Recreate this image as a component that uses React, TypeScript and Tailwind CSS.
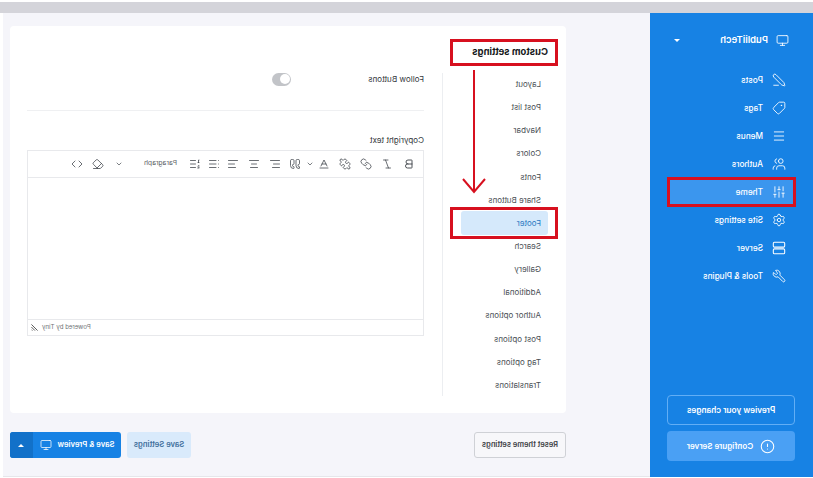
import React from "react";
import { Monitor, PenLine, Tag, Menu, Users, SlidersVertical, Settings, Wrench, CircleAlert, Bold, Italic, Link, Puzzle, Baseline, ChevronDown, Quote, AlignLeft, AlignCenter, AlignRight, List, ListOrdered, Eraser, Code } from "lucide-react";

const ServerIcon = ({ className }: { className?: string }) => (
  <svg viewBox="0 0 16 16" fill="none" stroke="currentColor" strokeWidth="1.2" className={className}>
    <rect x="1.5" y="1.5" width="13" height="5.5" rx="1.2" />
    <rect x="1.5" y="9" width="13" height="5.5" rx="1.2" />
  </svg>
);

const sideItems = [
  { label: "Posts", icon: PenLine },
  { label: "Tags", icon: Tag },
  { label: "Menus", icon: Menu },
  { label: "Authors", icon: Users },
  { label: "Theme", icon: SlidersVertical, active: true },
  { label: "Site settings", icon: Settings },
  { label: "Server", icon: ServerIcon },
  { label: "Tools & Plugins", icon: Wrench },
];

const navItems = ["Layout", "Post list", "Navbar", "Colors", "Fonts", "Share Buttons", "Footer", "Search", "Gallery", "Additional", "Author options", "Post options", "Tag options", "Translations"];

function Sidebar() {
  return (
    <aside className="w-[163px] h-[464px] bg-[#1782e4] flex flex-col text-white shrink-0">
      <div className="flex items-center h-[54px] pl-[24px] pr-[24px]">
        <Monitor className="w-[13px] h-[13px] mr-[8px]" strokeWidth={1.6} />
        <span className="text-[9.5px] font-semibold">PubliiTech</span>
        <span className="ml-auto w-0 h-0 border-x-[3px] border-x-transparent border-t-[3px] border-t-white" />
      </div>
      <nav className="flex flex-col mt-[-1px] pl-[18px] pr-[18px]">
        {sideItems.map((it) => {
          const Icon = it.icon;
          return (
            <div key={it.label} className={`h-[28px] flex items-center pl-[9px] w-[127px] rounded-[2px] ${it.active ? "bg-[#3b96ee]" : ""}`}>
              <Icon className="w-[14px] h-[14px] text-white shrink-0" strokeWidth={1.5} />
              <span className="ml-[9px] text-[8.25px] font-medium">{it.label}</span>
            </div>
          );
        })}
      </nav>
      <div className="mt-auto pl-[18px] pr-[17px] pb-[16px] flex flex-col gap-[6px]">
        <div className="h-[30px] rounded-[4px] border border-[#62aef5] flex items-center justify-center text-[8.25px] font-semibold">Preview your changes</div>
        <div className="h-[30px] rounded-[4px] bg-[#4aa0f4] flex items-center justify-center text-[8px] font-semibold gap-[7px]">
          <CircleAlert className="w-[15px] h-[15px]" strokeWidth={1.7} />
          Configure Server
        </div>
      </div>
    </aside>
  );
}

function Toolbar() {
  return (
    <div className="h-[27px] border-b border-[#e8e9ec] flex items-center pl-[8px] text-[#3a3f45]">
      <Bold className="w-[12px] h-[12px]" strokeWidth={1.8} />
      <Italic className="w-[12px] h-[12px] ml-[10px]" strokeWidth={1.5} />
      <Link className="w-[12px] h-[12px] ml-[9px]" strokeWidth={1.5} />
      <Puzzle className="w-[12px] h-[12px] ml-[9px]" strokeWidth={1.5} />
      <Baseline className="w-[12px] h-[12px] ml-[9px]" strokeWidth={1.5} />
      <ChevronDown className="w-[8px] h-[8px] ml-[4px]" strokeWidth={2} />
      <Quote className="w-[12px] h-[12px] ml-[5px]" strokeWidth={1.5} />
      <AlignLeft className="w-[12px] h-[12px] ml-[8px]" strokeWidth={1.5} />
      <AlignCenter className="w-[12px] h-[12px] ml-[9px]" strokeWidth={1.5} />
      <AlignRight className="w-[12px] h-[12px] ml-[9px]" strokeWidth={1.5} />
      <List className="w-[12px] h-[12px] ml-[7px]" strokeWidth={1.5} />
      <ListOrdered className="w-[12px] h-[12px] ml-[7px]" strokeWidth={1.5} />
      <span className="ml-[12px] text-[6.75px] text-[#5c6166]">Paragraph</span>
      <ChevronDown className="w-[8px] h-[8px] ml-[21px]" strokeWidth={2} />
      <Eraser className="w-[12px] h-[12px] ml-[11px]" strokeWidth={1.5} />
      <Code className="w-[12px] h-[12px] ml-[9px]" strokeWidth={1.5} />
    </div>
  );
}

function Card() {
  return (
    <section className="h-[387px] bg-white rounded-[4px] flex flex-col">
      <h2 className="h-[46.5px] pl-[18px] pt-[18px] text-[9.5px] leading-[16px] font-bold text-[#17191c]">Custom settings</h2>
      <div className="flex">
        <ul className="w-[124px] pl-[25px] pr-[18px] border-r border-[#eceef1] text-[8px] text-[#4a4f55]">
          {navItems.map((n) => (
            <li key={n} className="h-[23.15px] flex items-center">
              {n === "Footer" ? (
                <span className="ml-[-7px] w-[87px] h-[24px] flex items-center pl-[7px] bg-[#d5e9fb] text-[#2a78c2] rounded-[3px]">{n}</span>
              ) : n}
            </li>
          ))}
        </ul>
        <div className="flex-1 pl-[18px] pr-[17px] text-[8.1px] text-[#33373c]">
          <div className="flex h-[38px] border-b border-[#eff0f2]">
            <span className="w-[133px] leading-[12px]">Follow Buttons</span>
            <span className="w-[19px] h-[13px] rounded-full bg-[#c2c4c8] flex items-center justify-end pr-[1px] -scale-x-100">
              <span className="w-[10px] h-[10px] rounded-full bg-white" />
            </span>
          </div>
          <div className="mt-[23px] leading-[12px]">Copyright text</div>
          <div className="mt-[4px] h-[186px] border border-[#e8e9ec] flex flex-col">
            <Toolbar />
            <div className="flex-1" />
            <div className="h-[16px] border-t border-[#e8e9ec] flex items-center justify-end pr-[3px] gap-[4px] text-[6.2px] text-[#6f7378]">
              <span>Powered by Tiny</span>
              <svg viewBox="0 0 8 8" className="w-[7px] h-[7px]" fill="none" stroke="#555" strokeWidth="1.1"><path d="M7.5 .5L.5 7.5M7.5 3.5L3.5 7.5M7.5 6.5L6.5 7.5" /></svg>
            </div>
          </div>
        </div>
      </div>
    </section>
  );
}

function Main() {
  return (
    <main className="flex-1 bg-[#f5f5fa] pl-[84px] pr-[7px] pt-[13px] border-b border-[#e6e6ea] flex flex-col">
      <Card />
      <div className="mt-[19px] flex justify-between items-start font-semibold">
        <button className="w-[92px] h-[26px] border border-[#cfd1d6] rounded-[3px] text-[7.5px] text-[#3c4045] bg-[#f7f7fa]">Reset theme settings</button>
        <div className="flex gap-[6px] text-[7.7px]">
          <button className="w-[64px] h-[26px] rounded-[3px] bg-[#d9eafb] text-[#3f6f9c]">Save Settings</button>
          <div className="w-[111px] h-[26px] rounded-[3px] bg-[#1782e4] text-white flex overflow-hidden">
            <div className="w-[88px] flex items-center justify-center gap-[6px]">
              Save &amp; Preview
              <Monitor className="w-[12px] h-[12px]" strokeWidth={1.5} />
            </div>
            <div className="flex-1 bg-[#1271c9] flex items-center justify-center">
              <span className="w-0 h-0 border-x-[3px] border-x-transparent border-b-[3px] border-b-white" />
            </div>
          </div>
        </div>
      </div>
    </main>
  );
}

export default function App() {
  return (
    <div className="relative w-[813px] h-[478px] overflow-hidden bg-white -scale-x-100 font-['Inter','Liberation_Sans',sans-serif]">
      <div className="h-[13px] pt-[2px] bg-white"><div className="h-[11px] bg-[#d4d4da]" /></div>
      <div className="flex h-[464px] pr-[3px]">
        <Sidebar />
        <Main />
      </div>
      <div className="absolute left-[255px] top-[39px] w-[108px] h-[27px] border-[3px] border-[#d7101f]" />
      <div className="absolute left-[255px] top-[207px] w-[108px] h-[32px] border-[3px] border-[#d7101f]" />
      <div className="absolute left-[17px] top-[177px] w-[129px] h-[30px] border-[3px] border-[#d7101f]" />
      <svg className="absolute left-[325px] top-[70px] w-[28px] h-[125px]" viewBox="0 0 28 125" fill="none" stroke="#d7101f" strokeWidth="2">
        <path d="M14 0V122" />
        <path d="M3 109L14 122L25 109" />
      </svg>
    </div>
  );
}
